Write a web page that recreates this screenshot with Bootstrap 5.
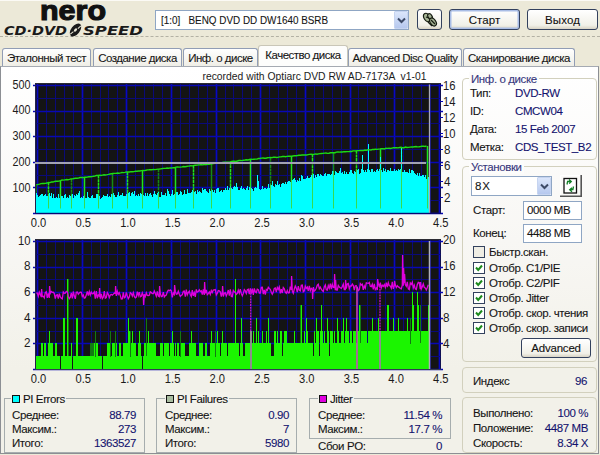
<!DOCTYPE html>
<html lang="ru">
<head>
<meta charset="utf-8">
<title>Nero CD-DVD Speed</title>
<link href="https://cdn.jsdelivr.net/npm/bootstrap@5.3.0/dist/css/bootstrap.min.css" rel="stylesheet">
<style>
body{width:600px;height:455px;overflow:hidden;background:#ece9d8;font-family:"Liberation Sans",Arial,sans-serif;font-size:11.5px;line-height:14px;letter-spacing:-.4px;color:#151515;-webkit-text-stroke:.1px currentColor}
.t-nowrap,.tabx,.val,.lbl{white-space:nowrap}
.head{height:37px;border-bottom:1px dashed #b3b1a4;border-top:1px solid #fbfaf5}
.logo{width:155px;height:36px;overflow:visible;letter-spacing:0}
.drive{width:254px;height:20px;margin-top:9px;border:1px solid #8fa6c4;background:#fff;padding-left:5px;font-size:11.5px;letter-spacing:0}
.drive-name{display:inline-block;transform:scaleX(.86);transform-origin:0 50%}
.arrow{width:14px;background:linear-gradient(#dbe6fb,#b6c8ee);border:1px solid #c6d4f0;border-radius:1px}
.xbtn{border:1.5px solid #33415e;border-radius:3px;background:linear-gradient(#fff,#f1f0e8 80%,#d8d3c4);color:#111;padding:0;font-size:11.5px;line-height:14px;letter-spacing:.1px}
.xbtn.dflt{box-shadow:inset 0 0 0 1.5px #a9bde6}
.w-72{width:71px;height:21px;margin:8px 0 0 7px}
.tool{width:25px;height:21px;margin-top:8px}
.tabs{height:29px;padding-left:2px;letter-spacing:-.5px}
.tabx{height:18px;border:1px solid #919db5;border-bottom:0;border-radius:3px 3px 0 0;background:linear-gradient(#fff,#efeee6);line-height:18px;text-align:center}
.tabx.on{height:21px;background:#fdfdfc;border-color:#c9c6b8;line-height:19px}
.page{height:388px;border:1px solid #8c8f94;border-top-color:#a5aab2;background:linear-gradient(#fff,#f8f7f4 45%,#f2f1e9 78%);margin-right:1px}
.leftcol{width:461px}
.plots{width:461px;height:324px;display:block}
.plots text{font-size:12.3px;letter-spacing:0;fill:#1b1b1b}
.plots .title{font-size:11.5px}
.box{border:1px solid #d2d0bd;border-radius:4px}
.sq{border:1px solid #a6adae;border-radius:0}
.cap{left:6px;top:-7px;padding:0 2px;background:#fcfcfb;color:#36367c}
.sq .cap{background:#f3f2eb;color:#111;padding:0 1px}
.chip{width:8px;height:8px;border:1px solid #111;margin-right:3px}
.val{color:#13136e}
.stat{height:14.2px}
.inp{border:1px solid #8fa6c4;background:#fff;height:19px;width:59px;padding-left:3px;line-height:17px}
.chk{width:12px;height:12px;border:1px solid #33415e;background:#fff;margin-right:4px}
.chk.off{background:#efede4}
.rightcol{width:135px}
</style>
<script src="https://cdn.jsdelivr.net/npm/bootstrap@5.3.0/dist/js/bootstrap.bundle.min.js"></script>
</head>
<body>
<header class="head d-flex">
  <svg class="logo flex-shrink-0" viewBox="0 1 155 36">
    <text x="40" y="19.6" font-weight="700" font-size="28.5" textLength="66" lengthAdjust="spacingAndGlyphs" fill="#111" stroke="#111" stroke-width="1.2">nero</text>
    <g font-family="DejaVu Sans" font-weight="700" font-style="italic" font-size="12" fill="#1a1a1a">
      <text x="4" y="34.8" textLength="63" lengthAdjust="spacingAndGlyphs">CD·DVD</text>
      <text x="83" y="34.8" textLength="60" lengthAdjust="spacingAndGlyphs">SPEED</text>
    </g>
    <g transform="rotate(-52 75.5 30)"><ellipse cx="75.5" cy="30" rx="7.5" ry="4.3" fill="#1a1a1a"/><ellipse cx="75.5" cy="30" rx="2" ry="1.2" fill="#ece9d8"/><path d="M69 28.5l4 .8M78 31l4 .8" stroke="#ece9d8" stroke-width="1"/></g>
  </svg>
  <div class="drive d-flex align-items-center justify-content-between t-nowrap"><span class="drive-name">[1:0] &nbsp; BENQ DVD DD DW1640 BSRB</span>
    <span class="arrow h-100 d-flex align-items-center justify-content-center"><svg width="9" height="7"><path d="M1 1.5l3.5 3.5L8 1.5" fill="none" stroke="#3c4a66" stroke-width="2"/></svg></span></div>
  <button class="xbtn tool ms-2"><svg width="18" height="16" viewBox="0 0 18 16" class="d-block mx-auto"><g stroke="#161c12" stroke-width="1.2" fill="#a5b394"><ellipse cx="6" cy="5.5" rx="3" ry="4.6" transform="rotate(-35 6 5.5)"/><ellipse cx="9" cy="4.5" rx="2" ry="3" transform="rotate(-35 9 4.5)"/><ellipse cx="12" cy="10" rx="2.7" ry="4.4" transform="rotate(-35 12 10)"/><path d="M5 5l3 1M10 8l4 4M7 10l4 4" fill="none"/></g></svg></button>
  <button class="xbtn dflt w-72">Старт</button>
  <button class="xbtn w-72">Выход</button>
</header>
<nav class="tabs d-flex align-items-end">
  <div class="tabx" style="width:89px">Эталонный тест</div>
  <div class="tabx" style="width:89px;margin-left:2px">Создание диска</div>
  <div class="tabx" style="width:75px;margin-left:1px">Инф. о диске</div>
  <div class="tabx on" style="width:90px">Качество диска</div>
  <div class="tabx" style="width:114px">Advanced Disc Quality</div>
  <div class="tabx" style="width:112px;margin-left:1px">Сканирование диска</div>
</nav>
<main class="page d-flex">
  <section class="leftcol flex-shrink-0">
    <svg class="plots" id="plots" viewBox="1 67 461 324"></svg>
    <div class="d-flex" style="padding:7px 0 0 3px">
      <div class="box sq position-relative" style="width:141px;height:55px;padding:9px 8px 0 7px">
        <div class="cap position-absolute d-flex align-items-center"><i class="chip" style="background:#0ff"></i>PI Errors</div>
        <div class="stat d-flex justify-content-between"><span class="lbl">Среднее:</span><span class="val">88.79</span></div>
        <div class="stat d-flex justify-content-between"><span class="lbl">Максим.:</span><span class="val">273</span></div>
        <div class="stat d-flex justify-content-between"><span class="lbl">Итого:</span><span class="val">1363527</span></div>
      </div>
      <div class="box sq position-relative" style="width:141px;height:55px;padding:9px 7px 0 8px;margin-left:11px">
        <div class="cap position-absolute d-flex align-items-center" style="left:8px"><i class="chip" style="background:#a9bda0"></i>PI Failures</div>
        <div class="stat d-flex justify-content-between"><span class="lbl">Среднее:</span><span class="val">0.90</span></div>
        <div class="stat d-flex justify-content-between"><span class="lbl">Максим.:</span><span class="val">7</span></div>
        <div class="stat d-flex justify-content-between"><span class="lbl">Итого:</span><span class="val">5980</span></div>
      </div>
      <div style="width:142px;margin-left:12px">
        <div class="box sq position-relative" style="height:41px;padding:9px 8px 0 8px">
          <div class="cap position-absolute d-flex align-items-center" style="left:8px"><i class="chip" style="background:#e000e0"></i>Jitter</div>
          <div class="stat d-flex justify-content-between"><span class="lbl">Среднее:</span><span class="val">11.54 %</span></div>
          <div class="stat d-flex justify-content-between"><span class="lbl">Максим.:</span><span class="val">17.7 %</span></div>
        </div>
        <div class="d-flex justify-content-between" style="padding:0 9px"><span class="lbl">Сбои PO:</span><span class="val">0</span></div>
      </div>
    </div>
  </section>
  <aside class="rightcol">
    <div class="box position-relative d-grid" style="margin-top:11px;height:82px;padding:7px 6px 5px 7px;grid-template-columns:45px 1fr;align-content:space-between">
      <div class="cap position-absolute">Инф. о диске</div>
      <span>Тип:</span><span class="val">DVD-RW</span><span>ID:</span><span class="val">CMCW04</span>
      <span>Дата:</span><span class="val">15 Feb 2007</span><span>Метка:</span><span class="val">CDS_TEST_B2</span>
    </div>
    <div class="box position-relative" style="margin-top:6px;height:196px;padding:8px 5px 0 8px">
      <div class="cap position-absolute">Установки</div>
      <div class="d-flex align-items-center" style="height:22px">
        <div class="inp d-flex justify-content-between" style="width:81px;height:20px;line-height:18px;letter-spacing:.8px">8X<span class="arrow d-flex align-items-center justify-content-center"><svg width="9" height="7"><path d="M1 1.5l3.5 3.5L8 1.5" fill="none" stroke="#3c4a66" stroke-width="2"/></svg></span></div>
        <svg width="22" height="22" style="margin-left:8px"><path d="M.5 21V.5H21" fill="none" stroke="#fff"/><path d="M0 21.2h21.2V0" fill="none" stroke="#555" stroke-width="1.6"/><rect x="4" y="3.5" width="12.5" height="14.5" fill="#fff" stroke="#111" stroke-width="1.3"/><path d="M7 9.5l.6-3h3M9 4.5l2.3 2-2.1 2.1M13.5 11.5l-.6 3h-3M12 12.8l-2.3 2 2.3 2" fill="none" stroke="#148028" stroke-width="1.3"/></svg>
      </div>
      <div class="d-flex align-items-center" style="height:20px;margin-top:3px;padding-left:2px"><span style="width:50px">Старт:</span><span class="inp">0000 MB</span></div>
      <div class="d-flex align-items-center" style="height:20px;margin-top:3px;padding-left:2px"><span style="width:50px">Конец:</span><span class="inp">4488 MB</span></div>
      <div id="checks" style="padding:0 0 0 2px"></div>
      <button class="xbtn d-block ms-auto" style="width:70px;height:20px;margin-top:3px;letter-spacing:-.2px">Advanced</button>
    </div>
    <div class="box d-flex justify-content-between" style="margin-top:5px;height:26px;padding:6px 9px 0 10px"><span>Индекс</span><span class="val">96</span></div>
    <div class="box" style="margin-top:4px;height:56px;padding:8px 8px 0 10px">
      <div class="d-flex justify-content-between" style="height:15px"><span>Выполнено:</span><span class="val">100 %</span></div>
      <div class="d-flex justify-content-between" style="height:15px"><span>Положение:</span><span class="val">4487 MB</span></div>
      <div class="d-flex justify-content-between" style="height:14px"><span>Скорость:</span><span class="val">8.34 X</span></div>
    </div>
  </aside>
</main>
<script>
document.getElementById('checks').innerHTML=[['Быстр.скан.',0,17],['Отобр. C1/PIE',1,15.5],['Отобр. C2/PIF',1,14.5],['Отобр. Jitter',1,15.5],['Отобр. скор. чтения',1,15],['Отобр. скор. записи',1,14.5]].map(function(c){
  return '<div class="d-flex align-items-center t-nowrap" style="height:'+c[2]+'px"><span class="chk '+(c[1]?'':'off')+' d-flex flex-shrink-0">'+(c[1]?'<svg width="10" height="10"><path d="M2 4.5l2.2 2.5L8 2.5" fill="none" stroke="#1d8a1d" stroke-width="2"/></svg>':'')+'</span>'+c[0]+'</div>'}).join('');

var seed=11;
function rnd(){seed=(seed*16807)%2147483647;return seed/2147483647}
function lerp(p,x){for(var i=1;i<p.length;i++)if(x<=p[i][0]){var a=p[i-1],b=p[i];return a[1]+(b[1]-a[1])*(x-a[0])/(b[0]-a[0])}return p[p.length-1][1]}
var s='';
function line(x1,y1,x2,y2,c,w,e){s+='<path d="M'+x1+' '+y1+'L'+x2+' '+y2+'" stroke="'+c+'" stroke-width="'+(w||1)+'" '+(e||'')+'/>'}
function rect(x,y,w,h,c){s+='<rect x="'+x+'" y="'+y+'" width="'+w+'" height="'+h+'" fill="'+c+'"/>'}
function text(x,y,t,anchor,w){s+='<text x="'+x+'" y="'+y+'" text-anchor="'+(anchor||'start')+'"'+(w?' textLength="'+w+'" lengthAdjust="spacingAndGlyphs"':'')+'>'+t+'</text>'}
function grid(top){
  rect(35,top,406,130.5,'#141414');
  for(var i=0;i<=45;i++){var x=Math.round(37+i*8.93)+.5;if(x<440)line(x,top+1,x,top+130,i%5?'#0a0a78':'#0808c4',i%5?1:1.7)}
  for(i=0;i<=10;i++){var y=Math.round(top+2+i*12.8)+.5;line(i%2?35:33,y,i%2?441:443,y,i%2?'#0a0a78':'#0808b4',i%2?1:1.7)}
  line(35,top+.5,441,top+.5,'#2b2b33');line(35.5,top,35.5,top+130,'#22224a');
  for(i=0;i<10;i++)text(38.5+i*44.7,top+143.7,(i/2).toFixed(1),'middle',15.5);
}
// PI errors with read and write speed
grid(83);
s+='<text class="title" x="202.5" y="80" textLength="224" lengthAdjust="spacingAndGlyphs">recorded with Optiarc DVD RW AD-7173A &#160;v1-01</text>';
[500,400,300,200,100].forEach(function(v,i){text(30.5,88.5+i*25.9,v,'end',18)});
for(var v=16,i=0;v>=2;v-=2,i++){text(v>9?443:444,89.5+i*16,v,'start',v>9?12.5:6.5);line(440,85.5+i*16,443,85.5+i*16,'#0808b4')}
var ct=[[36,196],[100,197],[135,195],[170,195],[200,192],[215,191],[232,188],[256,189],[280,185],[305,178],[333,173],[350,173],[370,171],[400,171],[412,173],[420,175],[429,180]];
var speed=[[37,184.5],[64,180],[82,177.5],[127,172],[170,168],[215,163.5],[260,158.5],[305,155],[350,151.3],[394,148],[428,146]];
var drops=[48.3,60.3,71.7,84.3,98,112,127,142.7,158.3,175.3,193.7,211.7,230.7,250.7,270.3,291.3,312.3,333.7,356.7,380,401.7,427.7];
drops.forEach(function(x,i){line(Math.floor(x)+.5,lerp(speed,x),Math.floor(x)+.5,208.5,i%3==2?'#158a15':'#1de41d',1.5,i%2?'':'stroke-dasharray="3 .6"')});
line(36.5,184,36.5,213,'#126812',1);
var d='M36 213';
for(var x=36;x<429;x++){var y=lerp(ct,x)-2.8+rnd()*4.6-(rnd()>.88?3:0);if(x==257)y=175;if(x==258)y=181;if(x==362)y=154.5;if(x==368)y=143.5;if(x==380)y=157;if(x==401)y=148;d+='V'+Math.round(y)+'h1'}
s+='<path d="'+d+'V213z" fill="#00ffff"/>';
drops.forEach(function(x){x=Math.floor(x)+.5;line(x,lerp(ct,x)-2,x,208.5,'#35dc50',1)});
d='';for(x=36.5;x<428;x+=1.5)d+=(d?'L':'M')+x+' '+(lerp(speed,x)+(rnd()-.5)*.6).toFixed(2);
s+='<path d="'+d+'" fill="none" stroke="#1cdc14" stroke-width="1.4"/>';
line(35,163,426,163,'#a2a2b2',2);line(429.5,84.5,429.5,213,'#a9a9b8',1.3);
line(35,213.3,441,213.3,'#0a0a60',1);
// PI failures and jitter
grid(239);
[10,8,6,4,2].forEach(function(v,i){text(30.5,244.5+i*25.7,v,'end',v>9?12.5:6.5)});
[20,16,12,8,4].forEach(function(v,i){text(443,244+i*26,v,'start',v>9?12.5:6.5)});
var spikes={49:3,63:4,64:4,67:7,68:7,76:4,77:4,95:3,110:3,115:3,128:4,129:3,130:3,132:3,139:3,146:4,148:3,172:3,180:3,191:3,211:3,215:3,217:3,222:3,235:7,241:4,256:4,268:4,300:5,301:5,306:4,316:4,321:5,327:4,337:4,343:4,346:4,359:5,360:5,372:4,378:4,387:5,388:5,393:4,398:4,407:4,410:4,412:6,413:5,417:6,418:5,420:5,428:5};
var two=[[41,42],[44,45],[48,52],[55,56],[71,72],[90,97],[107,109],[112,116],[119,120],[123,129],[131,135],[138,140],[144,155],[160,162],[164,168],[170,173],[175,175],[177,178],[181,184],[189,195],[199,202],[205,206],[210,219],[221,226],[228,234],[236,238],[240,242],[245,250]];
var gaps=[60,72,102,142];
for(x=36;x<429;x++){var h=1;
  if(x>=251){h=rnd()<(x<300?.3:x<357?.55:.93)?3:2;if(x>300&&x<357&&spikes[x])h=3}
  else two.forEach(function(p){if(x>=p[0]&&x<=p[1])h=2});
  if([282,313,319,329,271,272,273].indexOf(x)>=0)h=1;
  if(spikes[x])h=spikes[x];
  if(gaps.indexOf(x)>=0)h=0;
  if(h){var dark=(x>=90&&x<=93)||x==68||x==146||(spikes[x]&&x%5==0&&x!=235),y=Math.round(369-h*12.8);
    rect(x,y,1,369-y,'#1bf500');if(dark)rect(x,y,1,Math.round((h-(x<251?1:2))*12.8),'#127a12')}}
var jt=[[36,295],[60,295],[85,295],[130,295],[160,294],[200,293],[215,293],[240,293],[250,291],[285,291],[310,288],[350,287],[380,286],[400,285],[410,286],[428,286]];
var js={49:286,41:289,99:288,115:286,143:305,159:286,174:285,204:282,222:286,291:276,334:274,335:280,345:280,377:279,394:281,402:255,403:268,404:274,420:282,312:299};
d='';
for(x=36;x<=428;x++){d+=(d?'L':'M')+(x+.3)+' '+(lerp(jt,x)+(rnd()-.5)*8).toFixed(1);if(js[x])d+='L'+(x+.6)+' '+js[x]}
s+='<path d="'+d+'" fill="none" stroke="#e000dc" stroke-width="1.3"/>';
line(250.7,290,250.7,331,'#c414c4',1.3,'stroke-dasharray="2 .8"');line(251,331,251,369,'#8d8d8d',2);
line(357,287,357,369,'#d43fc4',1.5);
line(380,286,380,331,'#c414c4',1.3,'stroke-dasharray="2 .8"');line(380,331,380,369,'#8d8d8d',2);
line(429.5,241,429.5,369,'#b0b0b8',1.5);
line(35,369.5,441,369.5,'#333a55',1);
document.getElementById('plots').innerHTML=s;
</script>
</body>
</html>
